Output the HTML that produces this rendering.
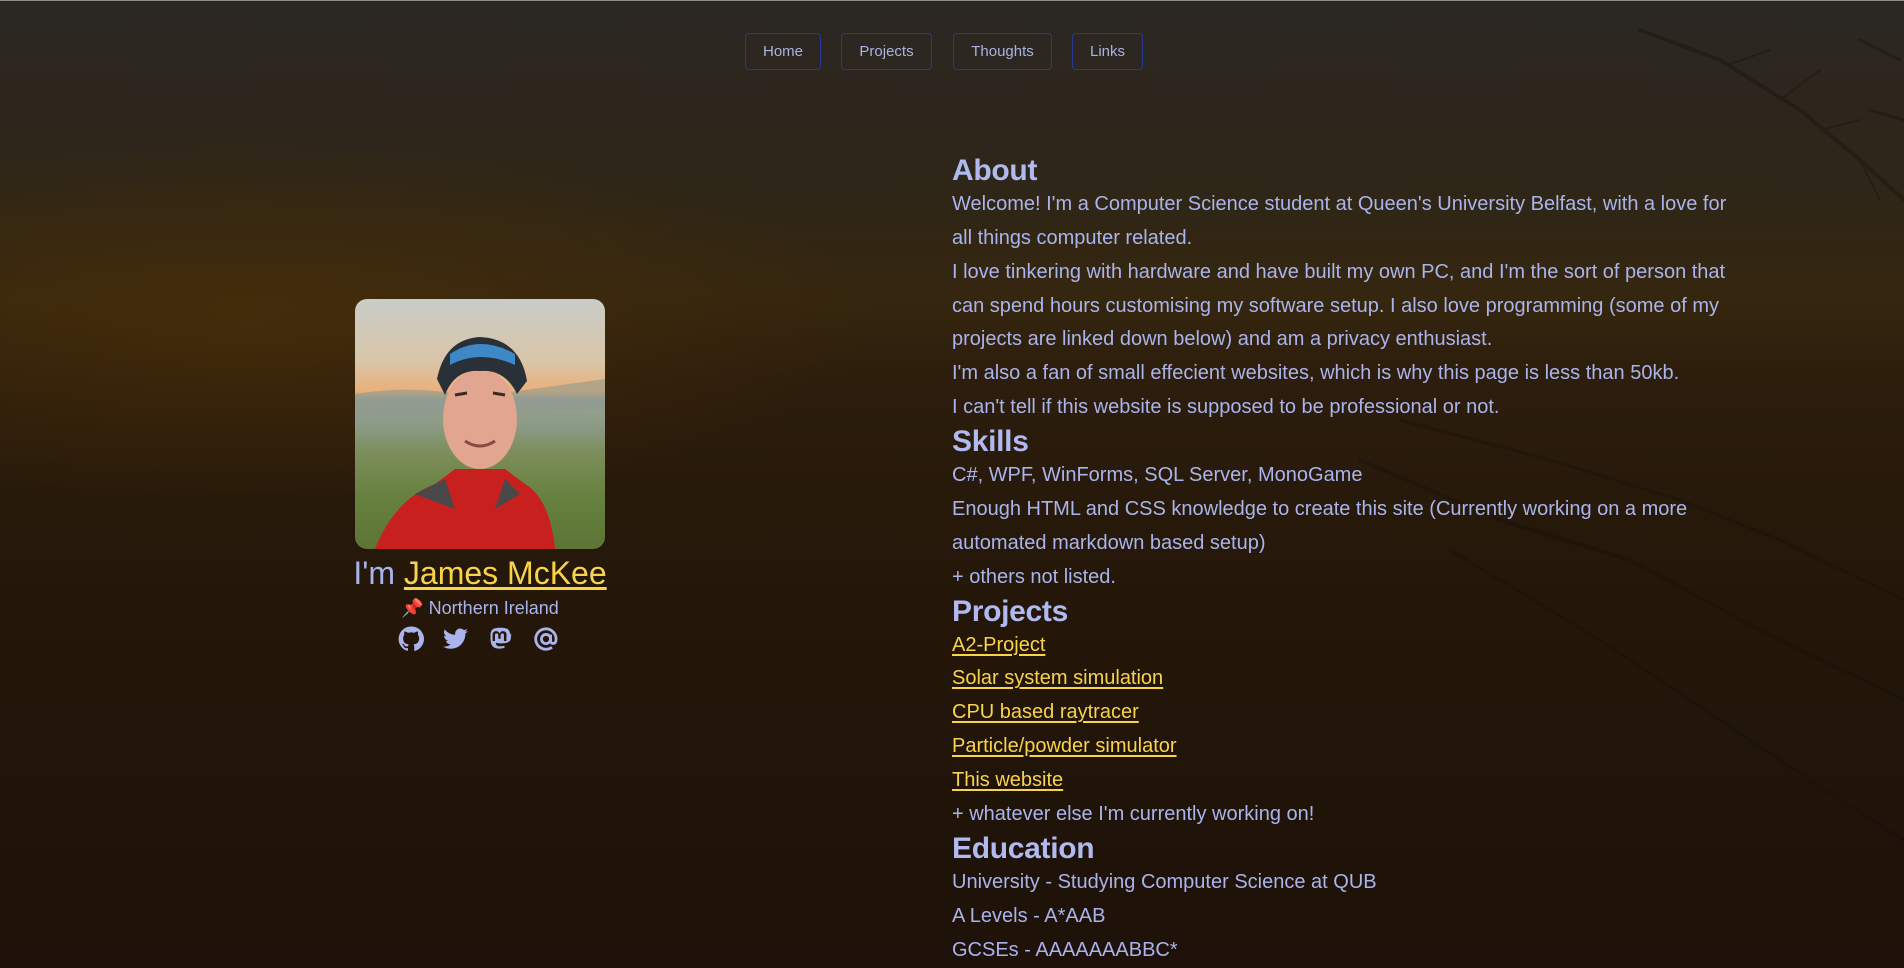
<!DOCTYPE html>
<html><head><meta charset="utf-8"><style>
html,body{margin:0;padding:0;width:1904px;height:968px;overflow:hidden}
body{position:relative;font-family:"Liberation Sans",sans-serif;color:#aab4ec;
background:
radial-gradient(ellipse 900px 260px at 250px 320px, rgba(72,46,8,0.75), rgba(72,46,8,0) 70%),
linear-gradient(180deg,#2b2723 0px,#2e2618 180px,#35260f 300px,#2c1d0c 380px,#241709 600px,#1d1109 968px);}
.topline{position:absolute;left:0;top:0;width:1904px;height:1px;background:#8a8a8a}
.nav a{position:absolute;top:33px;height:37px;border:1px solid #26399a;border-radius:4px;box-sizing:border-box;color:#a9b3e4;font-size:15px;line-height:36px;text-align:center;text-decoration:none}
.photo{position:absolute;left:355px;top:299px;width:250px;height:250px;border-radius:12px;overflow:hidden;
background:linear-gradient(180deg,#c9ccc8 0%,#d9c5a8 25%,#eab07a 37%,#9aa196 40%,#8a9a82 52%,#7e8f5e 60%,#66803e 80%,#5c7536 100%)}
.name{position:absolute;left:300px;width:360px;text-align:center;top:553px;font-size:32px;line-height:40px}
.name a{color:#f9d34a;text-decoration:underline;text-underline-offset:3px}
.loc{position:absolute;left:300px;width:360px;text-align:center;top:596px;font-size:18px;line-height:24px}
.icons{position:absolute;left:398px;top:626px}
.icons svg{position:absolute;top:0}
.col{position:absolute;left:952px;top:154px;white-space:nowrap;font-size:20px;line-height:33.9px}
.col h2{margin:0;font-size:30px;font-weight:bold;line-height:33.9px;color:#b0baf0;letter-spacing:-0.3px}
.col a{color:#f9d34a;text-decoration:underline;text-underline-offset:3px}
.col div{height:33.9px}
</style></head><body>
<div class="topline"></div>
<svg style="position:absolute;left:1300px;top:0" width="604" height="968" viewBox="0 0 604 968" fill="none" stroke="#15100c" stroke-linecap="round" opacity="0.35">
<path d="M340 30 L420 60 L500 110 L560 160 L604 200" stroke-width="4"/>
<path d="M430 64 L470 50 M480 100 L520 70 M520 130 L560 120 M560 160 L580 200" stroke-width="2"/>
<path d="M600 60 L560 40 M604 120 L570 110" stroke-width="3"/>
<path d="M100 420 L250 460 L380 500 L480 540 L604 600" stroke-width="3"/>
<path d="M60 460 L200 520 L330 560 L460 630 L604 700" stroke-width="4"/>
<path d="M150 550 L300 640 L420 720 L540 800 L604 840" stroke-width="3"/>
</svg>
<div class="nav">
<a style="left:745px;width:76px">Home</a>
<a style="left:841px;width:91px">Projects</a>
<a style="left:953px;width:99px">Thoughts</a>
<a style="left:1072px;width:71px">Links</a>
</div>
<div class="photo">
<svg width="250" height="250" viewBox="0 0 250 250">
<path d="M0 95 Q60 85 120 98 L250 80 L250 110 L0 120Z" fill="#8f9a90" opacity="0.6"/>
<path d="M20 250 Q40 200 80 185 L100 170 L150 170 L170 185 Q195 200 200 250Z" fill="#c8201e"/>
<path d="M60 195 L90 180 L100 210Z M150 180 L165 195 L140 210Z" fill="#4a4848"/>
<ellipse cx="125" cy="120" rx="37" ry="50" fill="#e2a690"/>
<path d="M82 80 Q90 40 125 38 Q165 40 172 82 L162 95 Q150 70 125 72 Q100 70 90 96Z" fill="#2a3038"/>
<path d="M95 55 Q125 35 160 55 L160 66 Q125 50 95 66Z" fill="#3f88c8"/>
<path d="M100 96 L112 94 M138 94 L150 96" stroke="#3a2a22" stroke-width="3"/>
<path d="M110 142 Q125 152 140 142" stroke="#8a4a44" stroke-width="3" fill="none"/>
</svg>
</div>
<div class="name">I'm <a>James McKee</a></div>
<div class="loc"><span style="color:#d83030">📌</span> Northern Ireland</div>
<div class="icons">
<svg style="left:0" width="26" height="26" viewBox="0 0 24 24" fill="#aab4ec"><path d="M12 .5a11.5 11.5 0 0 0-3.6 22.4c.6.1.8-.3.8-.6v-2c-3.2.7-3.900-1.5-3.9-1.5-.5-1.3-1.3-1.7-1.3-1.7-1-.7.1-.7.1-.7 1.2.1 1.8 1.2 1.8 1.2 1 1.8 2.7 1.3 3.4 1 .1-.8.4-1.3.7-1.6-2.6-.3-5.3-1.3-5.3-5.7 0-1.3.5-2.3 1.2-3.1-.1-.3-.5-1.5.1-3.1 0 0 1-.3 3.2 1.2a11 11 0 0 1 5.8 0c2.2-1.5 3.2-1.2 3.2-1.2.6 1.6.2 2.8.1 3.1.8.8 1.2 1.9 1.2 3.1 0 4.4-2.7 5.4-5.3 5.7.4.4.8 1.1.8 2.2v3.2c0 .3.2.7.8.6A11.5 11.5 0 0 0 12 .5z"/></svg>
<svg style="left:45px" width="26" height="26" viewBox="0 0 24 24" fill="#aab4ec"><path d="M23 4.6a9.4 9.4 0 0 1-2.7.7 4.7 4.7 0 0 0 2-2.6 9.4 9.4 0 0 1-3 1.1 4.7 4.7 0 0 0-8 4.3A13.3 13.3 0 0 1 1.6 3.2a4.7 4.7 0 0 0 1.5 6.3 4.7 4.7 0 0 1-2.1-.6v.1a4.7 4.7 0 0 0 3.8 4.6 4.7 4.7 0 0 1-2.1.1 4.7 4.7 0 0 0 4.4 3.3A9.4 9.4 0 0 1 0 18.9a13.3 13.3 0 0 0 7.2 2.1c8.6 0 13.4-7.200 13.4-13.4v-.6A9.6 9.6 0 0 0 23 4.6z"/></svg>
<svg style="left:90px" width="25" height="26" viewBox="0 0 24 24" fill="#aab4ec"><path d="M21.3 7.9c0-4.4-2.9-5.7-2.9-5.7C16.9 1.5 14.4 1.2 11.9 1.2h-.1c-2.5 0-5 .3-6.5 1C5.3 2.2 2.4 3.5 2.4 7.9c0 5.2-.3 11.4 4.8 12.8 1.9.5 3.6.6 4.900.5 2.500-.1 3.8-.9 3.8-.9l-.1-1.8s-1.8.6-3.8.5c-2-.1-4.1-.2-4.4-2.7v-.7s1.9.5 4.4.6c1.5.1 2.9-.1 4.4-.2 2.7-.3 5.1-2 5.4-3.6.4-2.5.5-6 .5-6zm-3.7 6h-2.3V8.4c0-1.2-.5-1.8-1.5-1.8-1.1 0-1.7.7-1.7 2.1v3.1H9.9V8.7c0-1.4-.6-2.1-1.7-2.1-1 0-1.5.6-1.5 1.8v5.5H4.4V8.2c0-1.2.3-2.1.9-2.8.6-.7 1.5-1 2.5-1 1.2 0 2.1.5 2.7 1.4l.6 1 .6-1c.6-.9 1.5-1.4 2.7-1.4 1 0 1.9.4 2.5 1 .6.7.9 1.6.9 2.8z"/></svg>
<svg style="left:135px" width="26" height="26" viewBox="0 0 24 24" fill="none" stroke="#aab4ec" stroke-width="2.6"><circle cx="12" cy="12" r="4.2"/><path d="M16.2 8v5.5c0 1.7 1.2 2.6 2.5 2.6s2.6-1 2.6-3.6A9.4 9.4 0 1 0 17.5 19.6"/></svg>
</div>
<div class="col">
<h2>About</h2>
<div>Welcome! I'm a Computer Science student at Queen's University Belfast, with a love for</div>
<div>all things computer related.</div>
<div>I love tinkering with hardware and have built my own PC, and I'm the sort of person that</div>
<div>can spend hours customising my software setup. I also love programming (some of my</div>
<div>projects are linked down below) and am a privacy enthusiast.</div>
<div>I'm also a fan of small effecient websites, which is why this page is less than 50kb.</div>
<div>I can't tell if this website is supposed to be professional or not.</div>
<h2>Skills</h2>
<div>C#, WPF, WinForms, SQL Server, MonoGame</div>
<div>Enough HTML and CSS knowledge to create this site (Currently working on a more</div>
<div>automated markdown based setup)</div>
<div>+ others not listed.</div>
<h2>Projects</h2>
<div><a>A2-Project</a></div>
<div><a>Solar system simulation</a></div>
<div><a>CPU based raytracer</a></div>
<div><a>Particle/powder simulator</a></div>
<div><a>This website</a></div>
<div>+ whatever else I'm currently working on!</div>
<h2>Education</h2>
<div>University - Studying Computer Science at QUB</div>
<div>A Levels - A*AAB</div>
<div>GCSEs - AAAAAAABBC*</div>
</div>
</body></html>
